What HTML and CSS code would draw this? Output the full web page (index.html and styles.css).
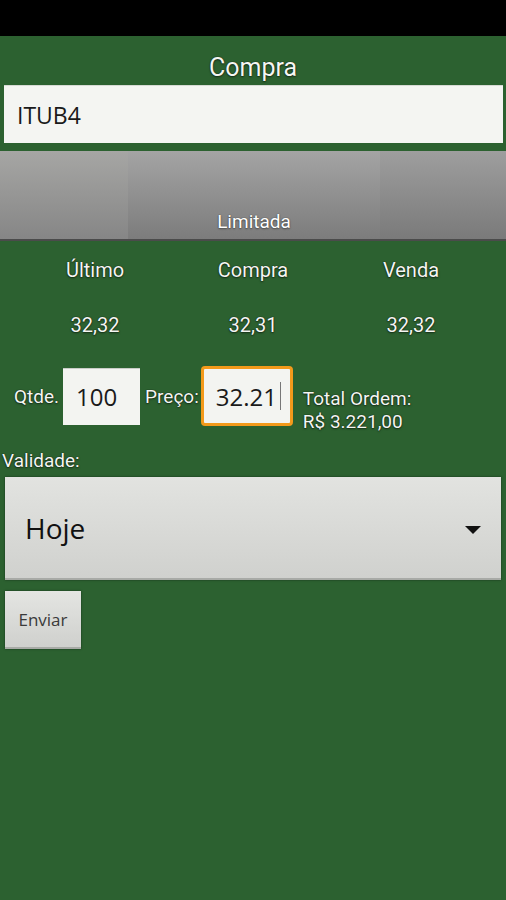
FILE: index.html
```html
<!DOCTYPE html>
<html>
<head>
  <title>Compra</title>
  <link rel="stylesheet" href="styles.css">
</head>
<body>
  <div class="statusbar"></div>

  <h2 class="title">Compra</h2>

  <div class="symbol">ITUB4</div>

  <div class="tabs">
    <div class="tab tab-left"></div>
    <div class="tab tab-mid">Limitada</div>
    <div class="tab tab-right"></div>
  </div>

  <div class="quotes">
    <span>Último</span>
    <span>Compra</span>
    <span>Venda</span>
    <span class="val">32,32</span>
    <span class="val">32,31</span>
    <span class="val">32,32</span>
  </div>

  <div class="order">
    <label>Qtde.</label>
    <div class="field qty">100</div>
    <label>Preço:</label>
    <div class="field price">32.21<span class="caret"></span></div>
    <div class="total">Total Ordem:<br>R$ 3.221,00</div>
  </div>

  <label class="validade">Validade:</label>
  <div class="spinner">
    <span>Hoje</span>
    <span class="arrow"></span>
  </div>

  <button class="send">Enviar</button>
</body>
</html>
```

FILE: styles.css
```css
body {
  margin: 0;
  width: 506px;
  min-height: 900px;
  background: #2c6130;
  font-family: Roboto, "Noto Sans", sans-serif;
  color: #f4f7f2;
}
.statusbar { height: 36px; background: #000; }

.title {
  margin: 0;
  padding: 15px 0 0;
  line-height: 34px;
  font-size: 25px;
  font-weight: normal;
  text-align: center;
  text-shadow: 0 0 1px #000, 0 1px 2px rgba(0,0,0,0.5);
}

.symbol {
  margin: 0 3px 0 4px;
  height: 58px;
  line-height: 58px;
  padding-left: 13px;
  box-sizing: border-box;
  background: #f4f5f2;
  border-top: 1px solid #d6dad4;
  color: #1a1a1a;
  font-family: "Open Sans", Roboto, sans-serif;
  font-size: 23px;
}

.tabs {
  display: flex;
  margin-top: 8px;
  height: 90px;
  border-bottom: 2px solid #4b4b4b;
  box-sizing: border-box;
}
.tab {
  display: flex;
  align-items: flex-end;
  justify-content: center;
  background: linear-gradient(#a4a4a4, #7c7c7c);
}
.tab-left { width: 128px; background: linear-gradient(#a6a6a4, #868686); }
.tab-mid {
  width: 252px;
  padding-bottom: 6px;
  font-size: 19px;
  color: #fff;
  text-shadow: 0 0 1px #333, 0 1px 2px rgba(0,0,0,0.4);
}
.tab-right { flex: 1; background: linear-gradient(#9e9e9e, #7a7a7a); }

.quotes {
  display: grid;
  grid-template-columns: repeat(3, 1fr);
  padding: 18px 16px 0;
  row-gap: 33px;
  text-align: center;
  font-size: 20px;
  line-height: 22px;
  text-shadow: 0 0 1px #000, 0 1px 2px rgba(0,0,0,0.5);
}

.order {
  display: flex;
  align-items: center;
  margin-top: 30px;
  padding-left: 14px;
  font-size: 19px;
  text-shadow: 0 0 1px #000, 0 1px 2px rgba(0,0,0,0.5);
}
.order label { margin-right: 4px; }
.field {
  display: flex;
  align-items: center;
  box-sizing: border-box;
  background: #f3f4f1;
  color: #1a1a1a;
  text-shadow: none;
  font-family: "Open Sans", Roboto, sans-serif;
}
.qty {
  width: 77px;
  height: 57px;
  margin-right: 5px;
  padding-left: 13px;
  font-size: 24px;
  border-top: 1px solid #c9cdc7;
}
.price {
  width: 92px;
  height: 60px;
  margin-left: -2px;
  padding-left: 12px;
  font-size: 24px;
  border: 3px solid #f39a1b;
  border-radius: 4px;
}
.caret {
  width: 1px;
  height: 28px;
  margin-left: 3px;
  background: #777;
}
.total {
  margin: 14px 0 -14px 10px;
  line-height: 23px;
  font-size: 19px;
}

.validade {
  display: block;
  margin: 24px 0 0 2px;
  font-size: 19px;
  line-height: 22px;
  text-shadow: 0 0 1px #000, 0 1px 2px rgba(0,0,0,0.5);
}

.spinner {
  display: flex;
  align-items: center;
  justify-content: space-between;
  margin: 5px 5px 0 5px;
  height: 103px;
  padding: 0 20px 0 20px;
  box-sizing: border-box;
  background: linear-gradient(#e2e3e0, #d0d1ce);
  border-bottom: 2px solid #a8aaa6;
  box-shadow: 0 0 2px rgba(0,0,0,0.5);
  color: #111;
  font-family: "Open Sans", Roboto, sans-serif;
  font-size: 28px;
}
.arrow {
  width: 0;
  height: 0;
  border-left: 8px solid transparent;
  border-right: 8px solid transparent;
  border-top: 8px solid #111;
  margin-top: 4px;
}

.send {
  display: block;
  margin: 11px 0 0 5px;
  width: 76px;
  height: 58px;
  padding: 0;
  border: none;
  border-bottom: 2px solid #a8aaa6;
  background: linear-gradient(#e4e5e2, #cfd0cd);
  box-shadow: 0 0 2px rgba(0,0,0,0.5);
  color: #3a3a3a;
  font-family: "Open Sans", Roboto, sans-serif;
  font-size: 17px;
}
```
